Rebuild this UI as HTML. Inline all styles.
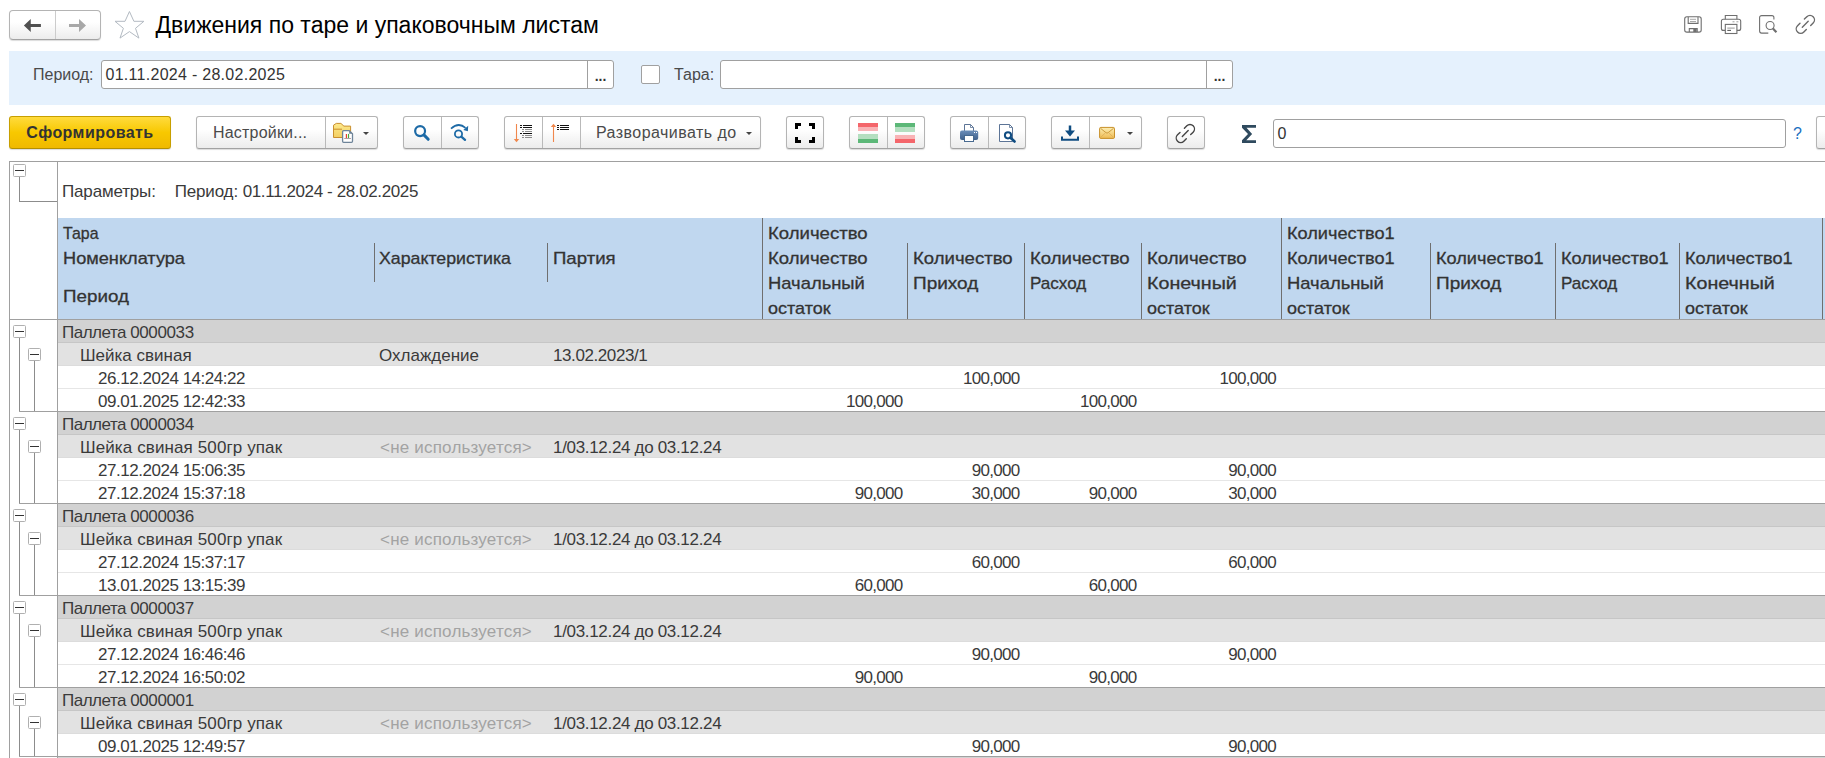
<!DOCTYPE html>
<html lang="ru"><head><meta charset="utf-8"><title>Движения по таре и упаковочным листам</title>
<style>
*{box-sizing:border-box;margin:0;padding:0}
html,body{width:1825px;height:758px;overflow:hidden;background:#fff}
body{position:relative;font-family:"Liberation Sans",Arial,sans-serif;font-size:16px;color:#333}
.abs{position:absolute}
svg{position:absolute;overflow:visible}
.btn{position:absolute;top:116px;height:33px;border:1px solid #b4b4b4;border-bottom-color:#a2a2a2;border-radius:3px;background:linear-gradient(#ffffff 0%,#ffffff 40%,#ececec 100%);box-shadow:0 1px 1px rgba(0,0,0,.14)}
.btn .sep{position:absolute;top:0;bottom:0;width:1px;background:#b9b9b9}
.lbl{position:absolute;white-space:nowrap;font-size:16px;line-height:20px;color:#4a4a4a}
.inp{position:absolute;height:29px;border:1px solid #a0a0a0;border-radius:3px;background:#fff}
.inp .t{position:absolute;left:3.5px;top:4px;font-size:16px;line-height:20px;color:#333;white-space:nowrap}
.inp .dd{position:absolute;right:0;top:0;bottom:0;width:26px;border-left:1px solid #a0a0a0;text-align:center;font-size:14px;font-weight:bold;line-height:31px;color:#333}
.caret{position:absolute;width:0;height:0;border-left:3px solid transparent;border-right:3px solid transparent;border-top:3px solid #444}
#grid{position:absolute;left:9px;top:161px;width:1816px;height:597px;border-top:1px solid #a0a0a0;border-left:1px solid #a0a0a0;overflow:hidden;background:#fff;font-family:"Liberation Sans",sans-serif}
#grid .row{position:absolute;left:48px;right:0;height:23px}
#grid .c{position:absolute;top:2px;height:22px;line-height:22px;font-size:17px;color:#3a3a3a;white-space:nowrap}
#grid .n{text-align:right}
.d{letter-spacing:-.37px}.p{letter-spacing:-.98px}.sl{letter-spacing:.4px}
.hd{position:absolute;font-weight:normal;font-size:17px;line-height:25px;color:#333;white-space:nowrap;-webkit-text-stroke:0.3px #333;transform-origin:0 50%}
.vl{position:absolute;width:1px;background:#6f6f6f}
.pm{position:absolute;width:13px;height:13px;border:1px solid #b0b0b0;border-radius:1.5px;background:#fff}
.pm:after{content:"";position:absolute;left:1px;right:1px;top:5px;height:1px;background:#333}
.tl{position:absolute;background:#8c8c8c}
</style></head><body>

<div class="btn" style="left:9px;top:10px;width:92px;height:30px;border-radius:4px"><div class="sep" style="left:45px;background:#ccc"></div></div>
<svg style="left:20px;top:15px" width="70" height="22" viewBox="0 0 70 22" ><path d="M3.900 10.500 L10.750 4 V8.950 H20.900 V12.050 H10.750 V17.100 Z" fill="#505050"/><path d="M66 10.500 L59 4 V8.950 H49 V12.050 H59 V17.100 Z" fill="#a8a8a8"/></svg>
<svg style="left:110px;top:8px" width="40" height="36" viewBox="0 0 40 36" ><polygon points="19.45,3.50 23.90,13.30 33.90,13.30 25.50,20.30 28.90,30.10 19.45,23.60 10.00,30.10 13.40,20.30 5.00,13.30 15.00,13.30" fill="#fff" stroke="#b3bac2" stroke-width="1"/></svg>
<div class="abs" style="left:155.5px;top:11px;font-size:23px;line-height:28px;color:#000;white-space:nowrap">Движения по таре и упаковочным листам</div>
<svg style="left:1680px;top:10px" width="140" height="28" viewBox="0 0 140 28" ><g fill="none" stroke="#6f6f6f" stroke-width="1.1"><rect x="4.700" y="6.800" width="16.500" height="15.300" rx="2.200"/><path d="M8.200 7 V13.400 H18 V7"/><path d="M9.300 22 V18.600 H17.200 V22"/></g><path d="M10 9.300 H16 M10 11.500 H16" stroke="#a9a9a9" stroke-width="1" fill="none"/><rect x="13.300" y="19" width="3.400" height="3" fill="#6f6f6f"/><g fill="none" stroke="#6f6f6f" stroke-width="1.1"><path d="M45.300 9.200 V5.500 H56.900 V9.200"/><path d="M45.300 20.400 H43.400 a2 2 0 0 1 -2 -2 V11.200 a2 2 0 0 1 2 -2 H58.700 a2 2 0 0 1 2 2 V18.400 a2 2 0 0 1 -2 2 H56.900"/><rect x="45.300" y="14.400" width="11.600" height="9.100"/></g><path d="M47.300 18.100 H54.700" stroke="#a0a0a0" stroke-width="1.100"/><path d="M47.300 20.400 H51" stroke="#5a5a5a" stroke-width="1.100"/><path d="M52.500 11.800 h2 M56.400 11.800 h2" stroke="#a0a0a0" stroke-width="1"/><g fill="none" stroke="#6f6f6f" stroke-width="1.1"><path d="M93.900 9.400 V7.600 a2 2 0 0 0 -2 -2 H81.600 a2 2 0 0 0 -2 2 V21.100 a2 2 0 0 0 2 2 H88.300"/><circle cx="90.100" cy="15.500" r="4"/></g><path d="M92.900 18.600 L96.400 22.200" stroke="#6f6f6f" stroke-width="2.200" fill="none"/><g fill="none" stroke="#6a6a6a" stroke-width="1.4" stroke-linecap="round" transform="translate(110,0.800)"><path d="M14.400 8.300 L16.850 5.850 A4.450 4.450 0 0 1 23.150 12.150 L20.700 14.600"/><path d="M10 12.400 L7.550 14.850 A4.450 4.450 0 0 0 13.850 21.150 L16.300 18.700"/><path d="M12.300 16.500 L18.200 10.500"/></g></svg>
<div class="abs" style="left:9px;top:51px;width:1816px;height:54px;background:#e5f1fd"></div>
<div class="lbl" style="left:33px;top:65px">Период:</div>
<div class="inp" style="left:101px;top:60px;width:513px"><div class="t" style="letter-spacing:.28px">01.11.2024 - 28.02.2025</div><div class="dd">...</div></div>
<div class="abs" style="left:641px;top:65px;width:19px;height:19px;border:1px solid #a0a0a0;border-radius:2px;background:#fff"></div>
<div class="lbl" style="left:674px;top:65px">Тара:</div>
<div class="inp" style="left:720px;top:60px;width:513px"><div class="dd">...</div></div>
<div class="btn" style="left:9px;width:162px;border-color:#c79f00;border-bottom-color:#b48f00;background:linear-gradient(#ffdb3d,#f8c800 50%,#f0b900);text-align:center;font-weight:bold;font-size:16px;line-height:31px;color:#333;letter-spacing:.45px">Сформировать</div>
<div class="btn" style="left:196px;width:182px"><div class="sep" style="left:128px"></div><div class="lbl" style="left:16px;top:6px;letter-spacing:.2px">Настройки...</div><div class="caret" style="left:166px;top:15px"></div></div>
<div class="btn" style="left:403px;width:76px"><div class="sep" style="left:37px"></div></div>
<div class="btn" style="left:504px;width:257px"><div class="sep" style="left:37px"></div><div class="sep" style="left:75px"></div><div class="lbl" style="left:91px;top:6px;letter-spacing:.45px">Разворачивать до</div><div class="caret" style="left:241px;top:15px"></div></div>
<div class="btn" style="left:786px;width:38px"></div>
<div class="btn" style="left:849px;width:76px"><div class="sep" style="left:37px"></div></div>
<div class="btn" style="left:950px;width:76px"><div class="sep" style="left:37px"></div></div>
<div class="btn" style="left:1051px;width:91px"><div class="sep" style="left:37px"></div><div class="caret" style="left:75px;top:15px"></div></div>
<div class="btn" style="left:1167px;width:38px"></div>
<div class="btn" style="left:1816px;width:20px"></div>
<svg style="left:0px;top:112px" width="1300" height="40" viewBox="0 0 1300 40" ><defs><linearGradient id="gf" x1="0" y1="0" x2="0" y2="1"><stop offset="0" stop-color="#fde98c"/><stop offset="1" stop-color="#f3cf62"/></linearGradient><linearGradient id="ge" x1="0" y1="0" x2="0" y2="1"><stop offset="0" stop-color="#fdefb4"/><stop offset="1" stop-color="#eeba52"/></linearGradient><linearGradient id="gp" x1="0" y1="0" x2="0" y2="1"><stop offset="0" stop-color="#6a8db8"/><stop offset="1" stop-color="#3f608b"/></linearGradient></defs><g transform="translate(0,-112)"><path d="M333.500 137.500 V125.200 L336.300 123.400 H340.900 L343.900 126.100 H350.600 V137.500 Z" fill="url(#gf)" stroke="#c98f2e" stroke-width="1"/><path d="M334 129.200 H342" stroke="#c98f2e" stroke-width="1" fill="none"/><path d="M343.600 130.700 H349.200 L352.500 133.800 V141.300 a1 1 0 0 1 -1 1 H343.600 a1 1 0 0 1 -1 -1 V131.700 a1 1 0 0 1 1 -1 Z" fill="#fff" stroke="#6e8499" stroke-width="1.300"/><path d="M349.200 130.700 L352.500 133.800 H349.200 Z" fill="#6e8499"/><path d="M346.400 133.900 V138.200" stroke="#e8432e" stroke-width="1.200"/><path d="M348.500 133.900 V138.200" stroke="#4aa83c" stroke-width="1.200"/><path d="M344.200 138.500 H351" stroke="#9a8a94" stroke-width=".8"/></g><g transform="translate(0,-112)" fill="none" stroke="#1d6aa6"><circle cx="420.100" cy="131.100" r="4.950" stroke-width="2.200"/><path d="M423.900 134.900 L428.200 139.300" stroke-width="3" stroke-linecap="round"/></g><g transform="translate(0,-112)" fill="none" stroke="#1d6aa6"><circle cx="458.500" cy="133.900" r="3.600" stroke-width="1.800"/><path d="M461.300 136.700 L465 139.800" stroke-width="2.400" stroke-linecap="round"/><path d="M451 128.700 Q458.500 121.800 465.500 127.800" stroke-width="1.700"/><path d="M463.300 129.900 L468.200 125.700 L467.900 131.300 Z" fill="#1d6aa6" stroke="none"/></g><g transform="translate(0,-112)"><path d="M516.500 124 V140" stroke="#f0874c" stroke-width="1.100" fill="none"/><path d="M513.800 139 H519.200 L516.500 142.300 Z" fill="#f0874c"/><rect x="520" y="125" width="2" height="1" fill="#111"/><rect x="523" y="125" width="9" height="1" fill="#111"/><rect x="520" y="127" width="2" height="1" fill="#111"/><rect x="523" y="127" width="9" height="1" fill="#111"/><rect x="520" y="133" width="2" height="1" fill="#111"/><rect x="523" y="133" width="9" height="1" fill="#111"/><rect x="522" y="129" width="2" height="1" fill="#8c8c8c"/><rect x="525" y="129" width="7" height="1" fill="#8c8c8c"/><rect x="522" y="131" width="2" height="1" fill="#8c8c8c"/><rect x="525" y="131" width="7" height="1" fill="#8c8c8c"/><rect x="522" y="135" width="2" height="1" fill="#8c8c8c"/><rect x="525" y="135" width="7" height="1" fill="#8c8c8c"/><rect x="522" y="137" width="2" height="1" fill="#8c8c8c"/><rect x="525" y="137" width="7" height="1" fill="#8c8c8c"/><path d="M553.500 126 V142" stroke="#f0874c" stroke-width="1.100" fill="none"/><path d="M550.800 127 H556.200 L553.500 123.700 Z" fill="#f0874c"/><rect x="557" y="125" width="2" height="1" fill="#111"/><rect x="560" y="125" width="9" height="1" fill="#111"/><rect x="557" y="127" width="2" height="1" fill="#111"/><rect x="560" y="127" width="9" height="1" fill="#111"/><rect x="557" y="129" width="2" height="1" fill="#111"/><rect x="560" y="129" width="9" height="1" fill="#111"/><path d="M795 129 V123 H801 V126 H798 V129 Z M809 123 H815 V129 H812 V126 H809 Z M815 137 V143 H809 V140 H812 V137 Z M801 143 H795 V137 H798 V140 H801 Z" fill="#000"/><rect x="858" y="123" width="20" height="4" fill="#f4666b"/><rect x="858" y="127" width="20" height="4" fill="#f9b3b6"/><rect x="858" y="134" width="20" height="5" fill="#b4dfc0"/><rect x="858" y="139" width="20" height="4" fill="#5cb878"/><rect x="895" y="123" width="20" height="4" fill="#5cb878"/><rect x="895" y="127" width="20" height="5" fill="#b4dfc0"/><rect x="895" y="135" width="20" height="4" fill="#f9b3b6"/><rect x="895" y="139" width="20" height="4" fill="#f4666b"/><path d="M964.500 131 V124.500 H970.500 L973.500 127.500 V131" fill="#fff" stroke="#5c7496" stroke-width="1"/><path d="M970.500 124.500 V127.500 H973.500" fill="none" stroke="#5c7496" stroke-width=".8"/><rect x="960" y="130.600" width="18.200" height="9.400" rx="2" fill="url(#gp)"/><rect x="964.500" y="135.500" width="9" height="6" fill="#fff" stroke="#47698f" stroke-width="1"/><rect x="974" y="132" width="1" height="1" fill="#fff"/><rect x="976" y="132" width="1" height="1" fill="#fff"/><path d="M999.500 124.500 H1009.500 L1012.500 127.500 V141.500 H999.500 Z" fill="#fff" stroke="#5c7496" stroke-width="1"/><path d="M1009.500 124.500 V127.500 H1012.500" fill="none" stroke="#5c7496" stroke-width=".8"/><circle cx="1008" cy="135.300" r="3.100" fill="#fff" stroke="#0f4c81" stroke-width="2"/><path d="M1010.500 137.800 L1014.600 141.500" stroke="#0f4c81" stroke-width="2.600" stroke-linecap="round"/><path d="M1070 125.500 V132" stroke="#0f4c81" stroke-width="2.500" fill="none"/><path d="M1065 130.600 H1075 L1070 136.400 Z" fill="#0f4c81"/><path d="M1062 136.500 V139.700 H1078 V136.500" fill="none" stroke="#0f4c81" stroke-width="2"/><rect x="1099.600" y="127.400" width="14.900" height="11" rx="1.200" fill="url(#ge)" stroke="#c8902a" stroke-width="1"/><path d="M1100.500 128.300 L1106 132.700 Q1107.050 133.500 1108.100 132.700 L1113.600 128.300" fill="none" stroke="#cc9a3c" stroke-width="1"/><path d="M1100.700 137.300 L1105.200 133 M1113.400 137.300 L1108.900 133" fill="none" stroke="#dcae58" stroke-width=".8"/><g fill="none" stroke="#444" stroke-width="1.400" stroke-linecap="round" transform="translate(1170,120)"><path d="M14.400 8.300 L16.850 5.850 A4.450 4.450 0 0 1 23.150 12.150 L20.700 14.600"/><path d="M10 12.400 L7.550 14.850 A4.450 4.450 0 0 0 13.850 21.150 L16.300 18.700"/><path d="M12.300 16.500 L18.200 10.500"/></g><path d="M1242 125 H1256 V127.800 H1246.500 L1252.100 134 L1246.300 140.200 H1256 V143 H1242 V140.300 L1248 134 L1242 127.800 Z" fill="#2f4a5e"/></g></svg>
<div class="inp" style="left:1273px;top:119px;width:513px;height:29px"><div class="t" style="top:4px">0</div></div>
<div class="lbl" style="left:1793px;top:124px;color:#1a6fc0;font-size:16px">?</div>
<div id="grid">
<div class="abs" style="left:47px;top:0;width:1px;height:597px;background:#a0a0a0"></div>
<div class="c" style="left:52px;top:19px"><span style="letter-spacing:-.16px">Параметры:</span>&nbsp;&nbsp;&nbsp;&nbsp;<span style="letter-spacing:-.15px">Период:</span> <span style="letter-spacing:-0.38px">01.11.2024 - 28.02.2025</span></div>
<div class="abs" style="left:48px;top:56px;width:1770px;height:101px;background:#c0d7ef"></div>
<div class="abs" style="left:0;top:157px;width:1816px;height:1px;background:#a0a0a0"></div>
<div class="hd" style="left:53px;top:59px;transform:scaleX(0.9355)">Тара</div>
<div class="hd" style="left:53px;top:84px;transform:scaleX(1.0692)">Номенклатура</div>
<div class="hd" style="left:53px;top:122px;transform:scaleX(1.1059)">Период</div>
<div class="hd" style="left:369px;top:84px;transform:scaleX(1.0438)">Характеристика</div>
<div class="hd" style="left:543px;top:84px;transform:scaleX(1.0946)">Партия</div>
<div class="hd" style="left:758px;top:59px;transform:scaleX(1.0918)">Количество</div>
<div class="vl" style="left:752px;top:56px;height:101px"></div>
<div class="hd" style="left:758px;top:84px;transform:scaleX(1.0918)">Количество</div>
<div class="hd" style="left:758px;top:109px;transform:scaleX(1.0814)">Начальный</div>
<div class="hd" style="left:758px;top:134px;transform:scaleX(1.0588)">остаток</div>
<div class="vl" style="left:897px;top:81px;height:76px"></div>
<div class="hd" style="left:903px;top:84px;transform:scaleX(1.0918)">Количество</div>
<div class="hd" style="left:903px;top:109px;transform:scaleX(1.1172)">Приход</div>
<div class="vl" style="left:1014px;top:81px;height:76px"></div>
<div class="hd" style="left:1020px;top:84px;transform:scaleX(1.0918)">Количество</div>
<div class="hd" style="left:1020px;top:109px;transform:scaleX(1.0042)">Расход</div>
<div class="vl" style="left:1131px;top:81px;height:76px"></div>
<div class="hd" style="left:1137px;top:84px;transform:scaleX(1.0918)">Количество</div>
<div class="hd" style="left:1137px;top:109px;transform:scaleX(1.1576)">Конечный</div>
<div class="hd" style="left:1137px;top:134px;transform:scaleX(1.0588)">остаток</div>
<div class="hd" style="left:1277px;top:59px;transform:scaleX(1.0682)">Количество1</div>
<div class="vl" style="left:1271px;top:56px;height:101px"></div>
<div class="hd" style="left:1277px;top:84px;transform:scaleX(1.0682)">Количество1</div>
<div class="hd" style="left:1277px;top:109px;transform:scaleX(1.0814)">Начальный</div>
<div class="hd" style="left:1277px;top:134px;transform:scaleX(1.0588)">остаток</div>
<div class="vl" style="left:1420px;top:81px;height:76px"></div>
<div class="hd" style="left:1426px;top:84px;transform:scaleX(1.0682)">Количество1</div>
<div class="hd" style="left:1426px;top:109px;transform:scaleX(1.1172)">Приход</div>
<div class="vl" style="left:1545px;top:81px;height:76px"></div>
<div class="hd" style="left:1551px;top:84px;transform:scaleX(1.0682)">Количество1</div>
<div class="hd" style="left:1551px;top:109px;transform:scaleX(1.0042)">Расход</div>
<div class="vl" style="left:1669px;top:81px;height:76px"></div>
<div class="hd" style="left:1675px;top:84px;transform:scaleX(1.0682)">Количество1</div>
<div class="hd" style="left:1675px;top:109px;transform:scaleX(1.1576)">Конечный</div>
<div class="hd" style="left:1675px;top:134px;transform:scaleX(1.0588)">остаток</div>
<div class="vl" style="left:1812px;top:56px;height:101px"></div>
<div class="vl" style="left:364px;top:81px;height:39px"></div>
<div class="vl" style="left:537px;top:81px;height:39px"></div>
<div class="row" style="top:158px;background:#d2d2d2;border-bottom:1px solid #c6c6c6"><div class="c" style="left:4px"><span style="letter-spacing:-0.5px">Паллета </span><span style="letter-spacing:-0.37px">0000033</span></div></div>
<div class="pm" style="left:3px;top:163px"></div>
<div class="row" style="top:181px;background:#e2e2e2;border-bottom:1px solid #dcdcdc"><div class="c" style="left:22px">Шейка свиная</div><div class="c" style="left:321px">Охлаждение</div><div class="c" style="left:495px"><span style="letter-spacing:-0.41px">13.02.2023/1</span></div></div>
<div class="pm" style="left:18px;top:186px"></div>
<div class="row" style="top:204px;border-bottom:1px solid #e6e6e6"><div class="c" style="left:40px"><span style="letter-spacing:-0.47px">26.12.2024 14:24:22</span></div><div class="c n" style="left:861.5px;width:100px"><span style="letter-spacing:-0.7px">100,000</span></div><div class="c n" style="left:1118px;width:100px"><span style="letter-spacing:-0.7px">100,000</span></div></div>
<div class="row" style="top:227px;border-bottom:1px solid #e6e6e6"><div class="c" style="left:40px"><span style="letter-spacing:-0.47px">09.01.2025 12:42:33</span></div><div class="c n" style="left:744.5px;width:100px"><span style="letter-spacing:-0.7px">100,000</span></div><div class="c n" style="left:978.5px;width:100px"><span style="letter-spacing:-0.7px">100,000</span></div></div>
<div class="row" style="top:250px;background:#d2d2d2;border-bottom:1px solid #c6c6c6"><div class="c" style="left:4px"><span style="letter-spacing:-0.5px">Паллета </span><span style="letter-spacing:-0.37px">0000034</span></div></div>
<div class="pm" style="left:3px;top:255px"></div>
<div class="row" style="top:273px;background:#e2e2e2;border-bottom:1px solid #dcdcdc"><div class="c" style="left:22px"><span style="letter-spacing:0.11px">Шейка свиная 500гр упак</span></div><div class="c" style="left:321px"><span style="color:#a3a3a3;letter-spacing:.2px;margin-left:1px">&lt;не используется&gt;</span></div><div class="c" style="left:495px"><span style="letter-spacing:-0.32px">1/03.12.24 до 03.12.24</span></div></div>
<div class="pm" style="left:18px;top:278px"></div>
<div class="row" style="top:296px;border-bottom:1px solid #e6e6e6"><div class="c" style="left:40px"><span style="letter-spacing:-0.47px">27.12.2024 15:06:35</span></div><div class="c n" style="left:861.5px;width:100px"><span style="letter-spacing:-0.7px">90,000</span></div><div class="c n" style="left:1118px;width:100px"><span style="letter-spacing:-0.7px">90,000</span></div></div>
<div class="row" style="top:319px;border-bottom:1px solid #e6e6e6"><div class="c" style="left:40px"><span style="letter-spacing:-0.47px">27.12.2024 15:37:18</span></div><div class="c n" style="left:744.5px;width:100px"><span style="letter-spacing:-0.7px">90,000</span></div><div class="c n" style="left:861.5px;width:100px"><span style="letter-spacing:-0.7px">30,000</span></div><div class="c n" style="left:978.5px;width:100px"><span style="letter-spacing:-0.7px">90,000</span></div><div class="c n" style="left:1118px;width:100px"><span style="letter-spacing:-0.7px">30,000</span></div></div>
<div class="row" style="top:342px;background:#d2d2d2;border-bottom:1px solid #c6c6c6"><div class="c" style="left:4px"><span style="letter-spacing:-0.5px">Паллета </span><span style="letter-spacing:-0.37px">0000036</span></div></div>
<div class="pm" style="left:3px;top:347px"></div>
<div class="row" style="top:365px;background:#e2e2e2;border-bottom:1px solid #dcdcdc"><div class="c" style="left:22px"><span style="letter-spacing:0.11px">Шейка свиная 500гр упак</span></div><div class="c" style="left:321px"><span style="color:#a3a3a3;letter-spacing:.2px;margin-left:1px">&lt;не используется&gt;</span></div><div class="c" style="left:495px"><span style="letter-spacing:-0.32px">1/03.12.24 до 03.12.24</span></div></div>
<div class="pm" style="left:18px;top:370px"></div>
<div class="row" style="top:388px;border-bottom:1px solid #e6e6e6"><div class="c" style="left:40px"><span style="letter-spacing:-0.47px">27.12.2024 15:37:17</span></div><div class="c n" style="left:861.5px;width:100px"><span style="letter-spacing:-0.7px">60,000</span></div><div class="c n" style="left:1118px;width:100px"><span style="letter-spacing:-0.7px">60,000</span></div></div>
<div class="row" style="top:411px;border-bottom:1px solid #e6e6e6"><div class="c" style="left:40px"><span style="letter-spacing:-0.47px">13.01.2025 13:15:39</span></div><div class="c n" style="left:744.5px;width:100px"><span style="letter-spacing:-0.7px">60,000</span></div><div class="c n" style="left:978.5px;width:100px"><span style="letter-spacing:-0.7px">60,000</span></div></div>
<div class="row" style="top:434px;background:#d2d2d2;border-bottom:1px solid #c6c6c6"><div class="c" style="left:4px"><span style="letter-spacing:-0.5px">Паллета </span><span style="letter-spacing:-0.37px">0000037</span></div></div>
<div class="pm" style="left:3px;top:439px"></div>
<div class="row" style="top:457px;background:#e2e2e2;border-bottom:1px solid #dcdcdc"><div class="c" style="left:22px"><span style="letter-spacing:0.11px">Шейка свиная 500гр упак</span></div><div class="c" style="left:321px"><span style="color:#a3a3a3;letter-spacing:.2px;margin-left:1px">&lt;не используется&gt;</span></div><div class="c" style="left:495px"><span style="letter-spacing:-0.32px">1/03.12.24 до 03.12.24</span></div></div>
<div class="pm" style="left:18px;top:462px"></div>
<div class="row" style="top:480px;border-bottom:1px solid #e6e6e6"><div class="c" style="left:40px"><span style="letter-spacing:-0.47px">27.12.2024 16:46:46</span></div><div class="c n" style="left:861.5px;width:100px"><span style="letter-spacing:-0.7px">90,000</span></div><div class="c n" style="left:1118px;width:100px"><span style="letter-spacing:-0.7px">90,000</span></div></div>
<div class="row" style="top:503px;border-bottom:1px solid #e6e6e6"><div class="c" style="left:40px"><span style="letter-spacing:-0.47px">27.12.2024 16:50:02</span></div><div class="c n" style="left:744.5px;width:100px"><span style="letter-spacing:-0.7px">90,000</span></div><div class="c n" style="left:978.5px;width:100px"><span style="letter-spacing:-0.7px">90,000</span></div></div>
<div class="row" style="top:526px;background:#d2d2d2;border-bottom:1px solid #c6c6c6"><div class="c" style="left:4px"><span style="letter-spacing:-0.5px">Паллета </span><span style="letter-spacing:-0.37px">0000001</span></div></div>
<div class="pm" style="left:3px;top:531px"></div>
<div class="row" style="top:549px;background:#e2e2e2;border-bottom:1px solid #dcdcdc"><div class="c" style="left:22px"><span style="letter-spacing:0.11px">Шейка свиная 500гр упак</span></div><div class="c" style="left:321px"><span style="color:#a3a3a3;letter-spacing:.2px;margin-left:1px">&lt;не используется&gt;</span></div><div class="c" style="left:495px"><span style="letter-spacing:-0.32px">1/03.12.24 до 03.12.24</span></div></div>
<div class="pm" style="left:18px;top:554px"></div>
<div class="row" style="top:572px;border-bottom:1px solid #e6e6e6"><div class="c" style="left:40px"><span style="letter-spacing:-0.47px">09.01.2025 12:49:57</span></div><div class="c n" style="left:861.5px;width:100px"><span style="letter-spacing:-0.7px">90,000</span></div><div class="c n" style="left:1118px;width:100px"><span style="letter-spacing:-0.7px">90,000</span></div></div>
<div class="pm" style="left:3px;top:2px"></div>
<div class="tl" style="left:9px;top:15px;width:1px;height:25px"></div><div class="tl" style="left:9px;top:39px;width:38px;height:1px"></div>
<div class="tl" style="left:9px;top:176px;width:1px;height:73px"></div>
<div class="tl" style="left:24px;top:199px;width:1px;height:50px"></div>
<div class="abs" style="left:9px;top:249px;width:1807px;height:1px;background:#a0a0a0"></div>
<div class="tl" style="left:9px;top:268px;width:1px;height:73px"></div>
<div class="tl" style="left:24px;top:291px;width:1px;height:50px"></div>
<div class="abs" style="left:9px;top:341px;width:1807px;height:1px;background:#a0a0a0"></div>
<div class="tl" style="left:9px;top:360px;width:1px;height:73px"></div>
<div class="tl" style="left:24px;top:383px;width:1px;height:50px"></div>
<div class="abs" style="left:9px;top:433px;width:1807px;height:1px;background:#a0a0a0"></div>
<div class="tl" style="left:9px;top:452px;width:1px;height:73px"></div>
<div class="tl" style="left:24px;top:475px;width:1px;height:50px"></div>
<div class="abs" style="left:9px;top:525px;width:1807px;height:1px;background:#a0a0a0"></div>
<div class="tl" style="left:9px;top:544px;width:1px;height:50px"></div>
<div class="tl" style="left:24px;top:567px;width:1px;height:27px"></div>
<div class="abs" style="left:9px;top:594px;width:1807px;height:1px;background:#a0a0a0"></div>
<div class="row" style="top:595px;background:#d2d2d2"></div>
</div>
</body></html>
